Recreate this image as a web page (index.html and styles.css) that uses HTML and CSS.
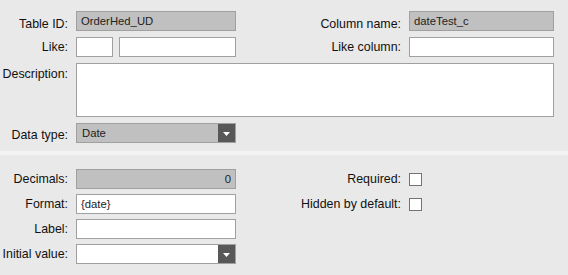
FILE: index.html
```html
<!DOCTYPE html>
<html>
<head>
<meta charset="utf-8">
<link rel="stylesheet" href="styles.css">
</head>
<body>
<div class="section top">
  <label class="lbl first">Table ID:</label>
  <div class="field ro">OrderHed_UD</div>
  <label class="lbl first">Column name:</label>
  <div class="field ro">dateTest_c</div>

  <label class="lbl">Like:</label>
  <div class="like">
    <div class="field short"></div>
    <div class="field grow"></div>
  </div>
  <label class="lbl">Like column:</label>
  <div class="field"></div>

  <label class="lbl desc">Description:</label>
  <div class="field area span3"></div>

  <label class="lbl dtype">Data type:</label>
  <div class="field ro select">
    <span class="sel-text">Date</span>
    <span class="sel-btn"><svg width="7" height="4" viewBox="0 0 7 4"><path d="M0 0H7L3.5 4Z" fill="#fff"/></svg></span>
  </div>
</div>
<div class="sep"></div>
<div class="section bottom">
  <label class="lbl dec">Decimals:</label>
  <div class="field ro num">0</div>
  <label class="lbl dec">Required:</label>
  <div class="check"></div>

  <label class="lbl">Format:</label>
  <div class="field">{date}</div>
  <label class="lbl">Hidden by default:</label>
  <div class="check"></div>

  <label class="lbl">Label:</label>
  <div class="field"></div>
  <div class="empty"></div>
  <div class="empty"></div>

  <label class="lbl">Initial value:</label>
  <div class="field select">
    <span class="sel-text"></span>
    <span class="sel-btn"><svg width="7" height="4" viewBox="0 0 7 4"><path d="M0 0H7L3.5 4Z" fill="#fff"/></svg></span>
  </div>
</div>
</body>
</html>
```

FILE: styles.css
```css
html, body {
  margin: 0;
  padding: 0;
  background: #e9e9e9;
  font-family: Arial, "Liberation Sans", sans-serif;
  color: #111;
  width: 568px;
  height: 275px;
  overflow: hidden;
}

.section {
  display: grid;
  grid-template-columns: 76px 160px 173px 145px;
  align-items: start;
}

.top {
  padding-top: 11px;
  grid-template-rows: 20px 20px 54px 20px;
  row-gap: 6px;
}

.bottom {
  padding-top: 14px;
  grid-template-columns: 76px 160px 173px 13px;
  grid-template-rows: 20px 20px 20px 20px;
  row-gap: 5px;
}

.sep {
  margin-top: 8px;
  height: 4px;
  background: #f3f3f3;
}

.lbl {
  font-size: 12.4px;
  line-height: 14px;
  text-align: right;
  padding-right: 8px;
  padding-top: 3px;
  white-space: nowrap;
}
.lbl.first { padding-top: 6px; }
.lbl.desc { padding-top: 4px; }
.lbl.dtype { padding-top: 5px; }
.lbl.dec { padding-top: 3px; }

.field {
  box-sizing: border-box;
  height: 20px;
  border: 1px solid #a0a0a0;
  background: #fff;
  font-size: 11.3px;
  line-height: 18px;
  padding: 0 4px;
  color: #222;
  white-space: nowrap;
  overflow: hidden;
}
.field.ro { background: #c0c0c0; }
.field.num { text-align: right; padding-right: 4px; }
.field.area { height: 54px; }
.span3 { grid-column: 2 / 5; }

.like {
  display: flex;
  gap: 6px;
}
.field.short { width: 37px; flex: none; }
.field.grow { flex: 1; }

.select {
  display: flex;
  padding: 0 0 0 5px;
}
.sel-text { flex: 1; }
.sel-btn {
  width: 17px;
  height: 18px;
  background: #585858;
  display: flex;
  align-items: center;
  justify-content: center;
}
.sel-btn svg { display: block; margin-top: 1px; }

.check {
  box-sizing: border-box;
  width: 13px;
  height: 13px;
  margin-top: 4px;
  border: 1px solid #737373;
  background: #fff;
}
```
